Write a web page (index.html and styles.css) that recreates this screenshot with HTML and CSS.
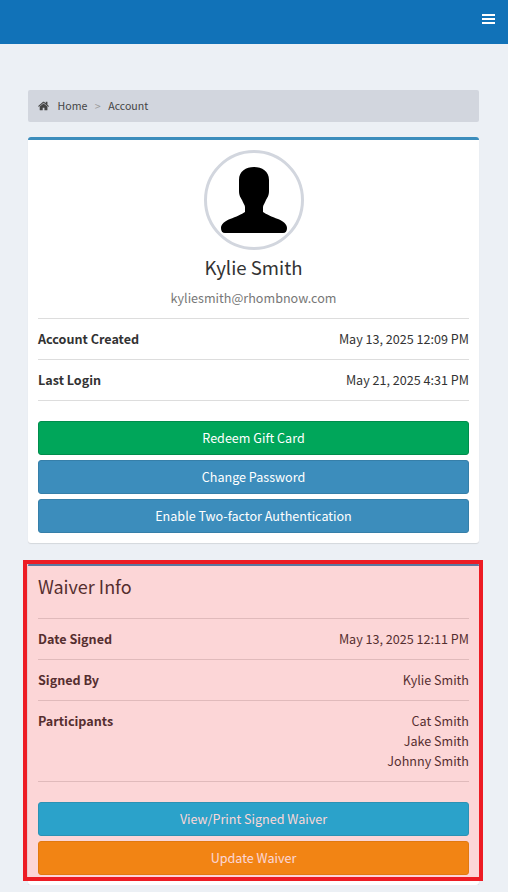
FILE: index.html
```html
<!DOCTYPE html>
<html lang="en">
<head>
    <meta charset="UTF-8">
    <meta name="viewport" content="width=device-width, initial-scale=1.0">
    <title>Account</title>
    <link rel="stylesheet" href="styles.css">
</head>
<body>

<header class="navbar">
    <a href="#" class="nav-toggle" aria-label="Menu">
        <span></span>
        <span></span>
        <span></span>
    </a>
</header>

<div class="content">
    <nav class="breadcrumb">
        <svg class="home-icon" viewBox="0 0 1792 1792"><path d="M1408 992v480q0 26-19 45t-45 19h-384v-384h-256v384h-384q-26 0-45-19t-19-45v-480q0-1 .5-3t.5-3l575-474 575 474q1 2 1 6zm223-69l-62 74q-8 9-21 11h-3q-13 0-21-7l-692-577-692 577q-12 8-24 7-13-2-21-11l-62-74q-8-10-7-23.500t11-21.500l719-599q32-26 76-26t76 26l244 204v-195q0-14 9-23t23-9h192q14 0 23 9t9 23v408l219 182q10 8 11 21.500t-7 23.500z"/></svg>
        <a href="#">Home</a>
        <span class="sep">&gt;</span>
        <span>Account</span>
    </nav>

    <section class="card">
        <div class="profile">
            <div class="avatar">
                <svg viewBox="0 0 100 100"><path d="M50 17C58 17 65 21 65 30L65 41C65 46 63 48 62 50C61 53 59 55 59 57L59 62C62 64 68 67 74 69C79 71 83 74 83 78Q83 83 79 83L21 83Q17 83 17 78C17 74 21 71 26 69C32 67 38 64 41 62L41 57C41 55 39 53 38 50C37 48 35 46 35 41L35 30C35 21 42 17 50 17Z"/></svg>
            </div>
            <h3 class="profile-name">Kylie Smith</h3>
            <p class="profile-email">kyliesmith@rhombnow.com</p>
        </div>
        <ul class="info-list">
            <li><b>Account Created</b><span>May 13, 2025 12:09 PM</span></li>
            <li><b>Last Login</b><span>May 21, 2025 4:31 PM</span></li>
        </ul>
        <div class="actions">
            <a href="#" class="btn btn-success">Redeem Gift Card</a>
            <a href="#" class="btn btn-primary">Change Password</a>
            <a href="#" class="btn btn-primary">Enable Two-factor Authentication</a>
        </div>
    </section>

    <section class="card card-waiver">
        <h3 class="card-title">Waiver Info</h3>
        <ul class="info-list">
            <li><b>Date Signed</b><span>May 13, 2025 12:11 PM</span></li>
            <li><b>Signed By</b><span>Kylie Smith</span></li>
            <li>
                <b>Participants</b>
                <span class="names">Cat Smith<br>Jake Smith<br>Johnny Smith</span>
            </li>
        </ul>
        <div class="actions">
            <a href="#" class="btn btn-info">View/Print Signed Waiver</a>
            <a href="#" class="btn btn-warning">Update Waiver</a>
        </div>
        <div class="highlight"></div>
    </section>
</div>

</body>
</html>
```

FILE: styles.css
```css
* {
    box-sizing: border-box;
}
body {
    margin: 0;
    background-color: #ecf0f5;
    color: #333;
    font-family: "Noto Sans CJK SC", "Noto Sans", sans-serif;
    font-size: 12.58px;
    line-height: 20px;
}
a {
    color: inherit;
    text-decoration: none;
}
.navbar {
    height: 44px;
    background-color: #1172b8;
    display: flex;
    justify-content: flex-end;
    align-items: flex-start;
    padding: 14px 13px 0 0;
}
.nav-toggle {
    display: flex;
    flex-direction: column;
    gap: 2px;
    width: 13px;
}
.nav-toggle span {
    height: 2px;
    background-color: #fff;
}
.content {
    padding: 46px 29px 0 28px;
}
.breadcrumb {
    height: 32px;
    background-color: #d2d6de;
    border-radius: 2px;
    display: flex;
    align-items: center;
    gap: 7.5px;
    padding: 0 10px;
    font-size: 10.6px;
    color: #444;
}
.home-icon {
    width: 12px;
    height: 12px;
    fill: #444;
}
.sep {
    color: #999;
}
.card {
    position: relative;
    background-color: #fff;
    border-top: 3px solid #3c8dbc;
    border-radius: 3px;
    box-shadow: 0 1px 1px rgba(0,0,0,0.1);
    padding: 10px;
    margin-top: 15px;
}
.card-waiver {
    margin-top: 20px;
}
.profile {
    text-align: center;
}
.avatar {
    width: 100px;
    height: 100px;
    margin: 0 auto;
    border: 3px solid #d2d6de;
    border-radius: 50%;
}
.avatar svg {
    display: block;
    width: 100px;
    height: 100px;
    margin: -3px;
}
.profile-name {
    margin: 4px 0 0;
    font-size: 18.6px;
    font-weight: 400;
    line-height: 26px;
}
.profile-email {
    margin: 8px 0 10px;
    color: #777;
    line-height: 20px;
}
.card-title {
    margin: 0 0 22px;
    font-size: 18px;
    font-weight: 400;
    line-height: 20px;
}
.info-list {
    list-style: none;
    margin: 0 0 20px;
    padding: 0;
    border-top: 1px solid #ddd;
}
.info-list li {
    display: flex;
    justify-content: space-between;
    padding: 10px 0;
    border-bottom: 1px solid #ddd;
}
.names {
    text-align: right;
}
.actions {
    display: flex;
    flex-direction: column;
    gap: 5px;
}
.btn {
    display: block;
    height: 34px;
    border: 1px solid transparent;
    border-radius: 3px;
    color: #fff;
    text-align: center;
    line-height: 32px;
}
.btn-success {
    background-color: #00a65a;
    border-color: #008d4c;
}
.btn-primary {
    background-color: #3c8dbc;
    border-color: #367fa9;
}
.btn-info {
    background-color: #00c0ef;
    border-color: #00acd6;
}
.btn-warning {
    background-color: #f39c12;
    border-color: #e08e0b;
}
.highlight {
    position: absolute;
    top: -6px;
    left: -5px;
    right: -4px;
    bottom: 4px;
    background-color: rgba(237,28,36,0.18);
    border: 4px solid #ed1c24;
}
```
